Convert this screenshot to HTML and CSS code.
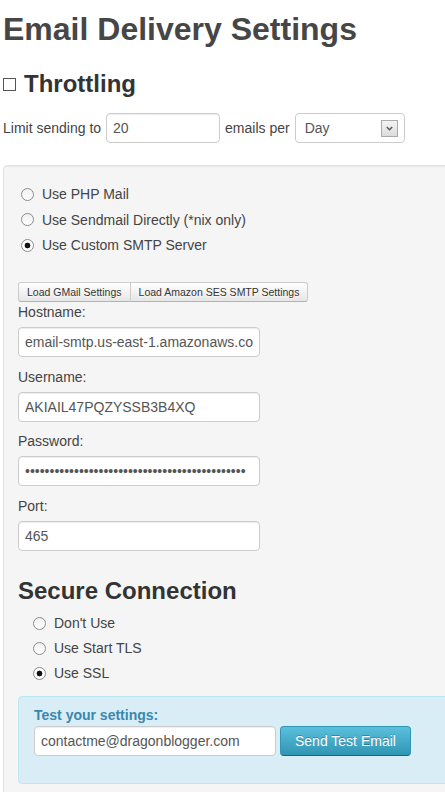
FILE: index.html
```html
<!DOCTYPE html>
<html lang="en">
<head>
    <meta charset="UTF-8">
    <meta name="viewport" content="width=device-width, initial-scale=1.0">
    <title>Email Delivery Settings</title>
    <link rel="stylesheet" href="styles.css">
</head>
<body>
    <div class="page">
        <h1 class="page-title">Email Delivery Settings</h1>

        <h3 class="section-title">
            <input type="checkbox" class="check">
            Throttling
        </h3>
        <div class="throttle-row">
            <span>Limit sending to</span>
            <input type="text" class="field field-short" value="20">
            <span>emails per</span>
            <div class="select">
                <span>Day</span>
                <span class="select-arrow">
                    <svg width="7" height="5" viewBox="0 0 7 5"><polyline points="0.8,1 3.5,3.8 6.2,1" fill="none" stroke="#555" stroke-width="1.4"/></svg>
                </span>
            </div>
        </div>

        <div class="well">
            <div class="radio-list">
                <label class="radio"><input type="radio" name="mailer"> Use PHP Mail</label>
                <label class="radio"><input type="radio" name="mailer"> Use Sendmail Directly (*nix only)</label>
                <label class="radio"><input type="radio" name="mailer" checked> Use Custom SMTP Server</label>
            </div>

            <div class="btn-group">
                <button class="btn btn-mini">Load GMail Settings</button>
                <button class="btn btn-mini">Load Amazon SES SMTP Settings</button>
            </div>

            <label class="field-label">Hostname:</label>
            <input type="text" class="field" value="email-smtp.us-east-1.amazonaws.com">
            <label class="field-label">Username:</label>
            <input type="text" class="field" value="AKIAIL47PQZYSSB3B4XQ">
            <label class="field-label">Password:</label>
            <input type="password" class="field" value="ABCDEFGHIJKLMNOPQRSTUVWXYZabcdefghijklmnopqrs">
            <label class="field-label">Port:</label>
            <input type="text" class="field" value="465">

            <h3 class="section-title secure">Secure Connection</h3>
            <div class="radio-list radio-list-indent">
                <label class="radio"><input type="radio" name="secure"> Don't Use</label>
                <label class="radio"><input type="radio" name="secure"> Use Start TLS</label>
                <label class="radio"><input type="radio" name="secure" checked> Use SSL</label>
            </div>

            <div class="alert">
                <div class="alert-title">Test your settings:</div>
                <div class="test-row">
                    <input type="text" class="field" value="contactme@dragonblogger.com">
                    <button class="btn btn-info">Send Test Email</button>
                </div>
            </div>
        </div>
    </div>
</body>
</html>
```

FILE: styles.css
```css
body {
    margin: 0;
    font-family: "Liberation Sans", Arial, sans-serif;
    font-size: 14px;
    line-height: 20px;
    color: #444;
    background: #fff;
}
.page {
    height: 792px;
    padding-left: 3px;
    overflow: hidden;
}
.page-title {
    margin: 9px 0 0;
    font-size: 32px;
    line-height: 40px;
    color: #464646;
}
.section-title {
    display: flex;
    align-items: center;
    gap: 8px;
    margin: 15px 0 0;
    font-size: 24px;
    line-height: 40px;
    color: #333;
}
.section-title.secure {
    margin: 20.5px 0 2px;
}
.check {
    appearance: none;
    width: 13px;
    height: 13px;
    margin: 0;
    border: 1px solid #555;
    background: #fff;
}
.throttle-row {
    display: flex;
    align-items: center;
    gap: 5px;
    height: 30px;
    margin-top: 9px;
}
.field {
    display: block;
    box-sizing: border-box;
    width: 242px;
    height: 30px;
    margin: 0 0 9.5px;
    padding: 4px 6px;
    border: 1px solid #ccc;
    border-radius: 4px;
    background: #fff;
    box-shadow: inset 0 1px 1px rgba(0, 0, 0, 0.075);
    font-family: "Liberation Sans", Arial, sans-serif;
    font-size: 14px;
    color: #555;
}
.throttle-row .field,
.test-row .field {
    margin: 0;
}
.field-short {
    width: 114px;
}
.select {
    display: flex;
    align-items: center;
    justify-content: space-between;
    box-sizing: border-box;
    width: 110px;
    height: 30px;
    padding: 0 6px 0 9px;
    border: 1px solid #ccc;
    border-radius: 4px;
    background: #fff;
    color: #555;
}
.select-arrow {
    display: flex;
    align-items: center;
    justify-content: center;
    box-sizing: border-box;
    width: 17px;
    height: 17px;
    border: 1px solid #aaa;
    background: linear-gradient(#f4f4f4, #dcdcdc);
}
.well {
    margin: 22px -40px 0 0;
    padding: 18px 14px 20px;
    border: 1px solid #e3e3e3;
    border-radius: 4px;
    background: #f5f5f5;
    box-shadow: inset 0 1px 1px rgba(0, 0, 0, 0.05);
}
.radio-list {
    display: flex;
    flex-direction: column;
    gap: 5.5px;
    padding-left: 3px;
}
.radio-list-indent {
    gap: 5px;
    padding-left: 15px;
}
.radio {
    display: flex;
    align-items: center;
    line-height: 20px;
}
.radio input {
    appearance: none;
    width: 13px;
    height: 13px;
    margin: 0 8px 0 0;
    border: 1px solid #8c8c8c;
    border-radius: 50%;
    background: linear-gradient(#f0f0f0, #fff);
}
.radio input:checked {
    background: radial-gradient(circle, #111 0, #111 2.6px, #fff 3.2px);
}
.btn-group {
    display: flex;
    margin-top: 27px;
}
.btn {
    font-family: "Liberation Sans", Arial, sans-serif;
    cursor: pointer;
}
.btn-mini {
    height: 20px;
    padding: 0 8px;
    border: 1px solid #ccc;
    border-bottom-color: #b3b3b3;
    background: linear-gradient(#fff, #e6e6e6);
    font-size: 10.5px;
    line-height: 18px;
    color: #333;
    text-shadow: 0 1px 1px rgba(255, 255, 255, 0.75);
}
.btn-mini:first-child {
    border-radius: 3px 0 0 3px;
}
.btn-mini + .btn-mini {
    margin-left: -1px;
    border-radius: 0 3px 3px 0;
}
.field-label {
    display: block;
    margin-bottom: 5px;
    color: #444;
}
.alert {
    margin-top: 13px;
    padding: 8px 15px 27px;
    border: 1px solid #bce8f1;
    border-radius: 4px;
    background: #d9edf7;
    color: #3a87ad;
}
.alert-title {
    font-weight: bold;
}
.test-row {
    display: flex;
    gap: 4px;
    margin-top: 1px;
}
.btn-info {
    height: 30px;
    padding: 0 14px;
    border: 1px solid #2f96b4;
    border-bottom-color: #1f6377;
    border-radius: 4px;
    background: linear-gradient(#5bc0de, #2f96b4);
    font-size: 14px;
    color: #fff;
    text-shadow: 0 -1px 0 rgba(0, 0, 0, 0.25);
}
```
